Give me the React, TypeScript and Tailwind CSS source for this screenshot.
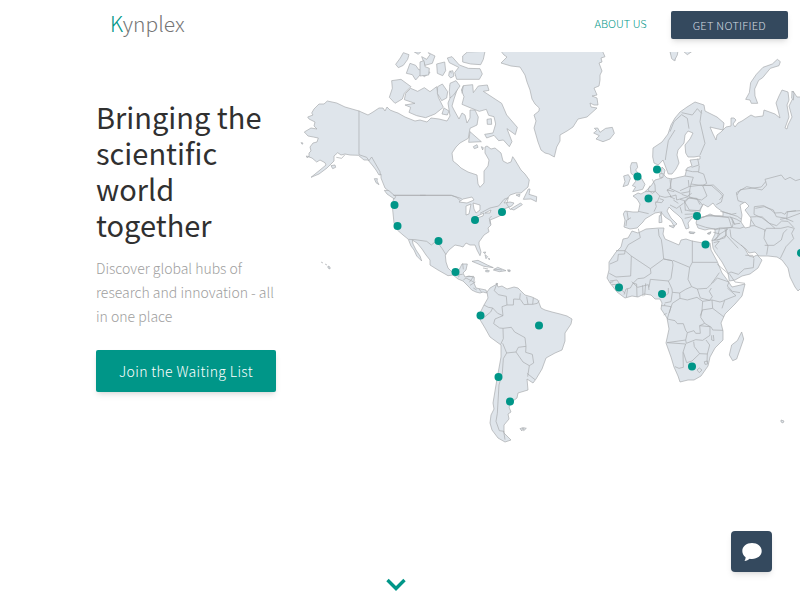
interface MapRegion {
  x: number;
  y: number;
  land?: string;
  borders?: string;
}

// Крупные массивы суши, в координатах карты
const continents = [
  // Северная Америка
  'M327.3 101L324 104L319 104L314 109L311.7 113L313 115L307.7 117L309 119L315 122L314 126L317 129L311 128L304.3 132L308 136L313.3 137L318.3 138L317 142L313 143L310 147L311 151L309 153L309 157L312 158L316.7 162L320 160L325 162.7L326 165L320 170L311 177.3L319 174L327 168L334 161L334 156L337.7 152.7L341 155L345 154L350 155L358.3 155.3L364 160L368 160L373 166L376 170L379 175L381 174L381 178L383 183L385 188L390 192L394 196L393 202L392.7 210L394 223L397.3 230L403 235L408.3 239.3L411 246L414 250L416.7 256L421.7 261L420 256L416 250L413 244L412.3 240L417 243L422 249L426 255L430 260L430 265L438 270L448 275.7L453 275L458 279L463 281L469 287L471.7 290L476 292L480 293L483 292L486.7 293L486 290L481 289L476 288L474 283L474.3 277.3L469 276L465 277L463 273L466 270L467.3 264L462 264L459 270L452 272L448 268L446 262L445.3 255L449 250L455 245L460 246L463 247L466 243L470 245L475 245L477 250L480 255.7L481 252L479 245L479 242L484 235L489 231.7L488 228L491 225L490 220L495 218L501.7 215L505 213L504 209L511.7 206L514 203L510 202L504 203L510 195L516 193L521 193L528 187L529.3 180L525 174L521 170L518 165L515 160L512.7 156.7L511 162L507.3 163.3L503 161L501 153L495 148L491 149L487 146L485 147L485 153L489 160L488 166L484 171L484 183L480 187.3L478 184L477 175L468 172L461 168L458 165L453 161L452 153L456 147L460 143L468.3 138.3L470 128.3L477 125L478.3 117L475 110L470 110L470 118L467 123L465 115L462 113L459 119L454 110L452 106L454 99L458 87L455 82L450 85L452 93L448 103L450 116L447 121L439 119L431 118L427 122L420 120L415 121L405 117L398 113L395 112L390 110L387 107L385 111L383 108L379 108L373 112L368 115L359 111L345 107L336.7 103Z',
  // Гренландия
  'M500 50L504 55L507 57L501 63L511 66L520 67L525 75L527 82L530 90L532 99L535 104L539.3 108L539 111L534 115L536 121L534 128L538 142L541 150L545 153L549 154L554.3 157L556.7 147L560 141L560 135L567 131L573 127L578 119L587 117L597 108L591 107L590 103L594 105L598 105L597 98L592 96L597 95L594 88L599 86L600 80L600 75L602 71L599 63L602 62L601 58L605 56.7L602 50Z',
  // Евразия
  'M802 97L797 97L793 91L793 98L789 106L792 117L788 125L787 129L785 128L789 117L787 105L789 100L788 92L782 90L779 96L776 103L778 110L780 118L775 114L764 110L763 116L755 117L751 115L748 117L742 121L738 123L735 127L733 124L736 120L734 118L731 118L731 126L726 127L721 132L717 135L716 140L713 134L710 127L714 128L723 130L724 123L717 117L705 111L704 105L695 102L687 107L680 112L675 118L671 125L668 134L662 142L653 148L652.7 157L654 163L658.3 165L663 160L666 168L668.3 174L672 174L676 169L679 163L677 155L678 150L684 143L685 135L688 131L693 133L690 139L685 145L685.7 153L688 157L694 157L700 156L700 159L690 160L692 166L687 168L685 176L680 177L672 179L667 178L664 175L665 170L662 167L661 173L662 178L655 180L651 186L645 191.7L641 194L638 193L633 196L637 199L640 204L638.3 212L633 212L625 211L623.3 214L625 220L624 227L630 229L637 228L643 222L645 219L650 216L655 213L661 212L665 217L671 221L674 226L677 224L671 218L667 211L669 207L673 211L678 215L682 219L684 224L686 229L689 228L688 223L692 218L697 216L700 212L701 208L703 204L708 207L713 203L716 207L723 212L723 216L715 216L710 214L704 217L697 219L696 223L698 228L705 230L709 229L715 229L715 234L712 240L713 248L715 252L722 262L728 273L729.3 281L735 280L742 276L750 274L758 268L762 260L757 255L753 257L749 256L745 249L741 245L746 249L749 253L755 252L759 256L768 256L777 257L782 260L785 264L788 268L790 277L795 287L798 291L802 287Z',
  // Африка
  'M632 231L628 238L623 239L621 247L616 252L609 262L609 270L607 278L610 283L617 292L625 298L632 296L638 297L644 294L651 295L655 299L660 299L662 303L661 309L667 318L669 329L666 343L671 357L674 367L678 376L680 382L688 380L694 380L701 376L708 366L710 357L715 348L723 340L723 331L721 323L725 314L735 304L742 296L745 284L732 287L728 281L722 273L717 261L711 250L710 243L703 243L692 241L686 239L681 240L679 245L672 242L665 239L663 234L664 228L659 228L646 229L638 233Z',
  // Южная Америка
  'M487 292L490 288L497 284L498 287L502 286L507 289L514 287L518 288L525 295L532 297L538 300L541 308L545 310L552 312L560 314L567 316L572 319L571 324L565 333L565 341L562 350L555 353L546 358L542 369L536 379L533 383L527 379L528 390L518 393L517 398L513 401L509 407L511 412L508 414L509 419L504 425L504 433L511 440L505 442L498 438L492 430L490 423L491 415L494 409L493 403L497 379L501 357L501 345L490 337L485 328L479 318L480 313L484 305L488 298Z',
];

// Острова и внутренние границы, сетка каждого участка втрое мельче карты
const regions: MapRegion[] = [
  // Аляска и север Канады
  {
    x: 295,
    y: 50,
    land: 'M325 8L342 14L338 28L325 46L310 53L302 43L316 24ZM358 6L378 5L370 13ZM345 40L362 46L372 60L390 52L405 68L388 80L378 72L362 90L352 74L334 70ZM290 92L318 88L348 110L328 130L322 147L300 160L283 142L292 115ZM347 115L368 124L388 113L405 125L425 110L430 142L445 172L420 192L392 203L365 197L342 187L347 172L330 165L360 160L328 149L332 130ZM380 20L395 28L405 14L400 8L420 18L412 40L390 46ZM108 347L120 345L122 352L113 356ZM238 386L247 386L246 393L252 404L243 398ZM268 421L282 422L302 440L298 447L276 432ZM18 278L24 279L22 283ZM34 318L42 320L36 323Z',
    borders: 'M192 182L192 314L215 322L222 332L230 321L255 365L256 376M298 436L392 436M124 322L140 325L150 314',
  },
  // Канадский архипелаг, Великие озёра, Атлантика
  {
    x: 420,
    y: 50,
    land: 'M0 36L12 32L15 50L28 55L26 75L0 78ZM50 42L74 36L77 62L68 77L52 70ZM82 24L96 20L118 45L145 55L180 56L187 72L178 88L110 88L104 68L116 52L88 38ZM128 18L142 6L195 4L190 28L182 44L152 42L128 36ZM88 65L98 62L102 78L92 84L86 77ZM53 110L67 102L83 125L80 144L65 152L52 130ZM90 100L108 92L120 108L101 135L90 144L88 124ZM72 174L87 183L82 195L66 192ZM130 107L158 104L160 128L175 108L202 105L207 121L190 124L222 145L245 160L260 195L292 232L286 254L261 236L276 275L268 290L250 270L236 272L222 256L200 264L194 253L219 249L227 222L222 200L206 196L199 178L178 184L150 173L126 163L132 140L124 120ZM150 245L184 275L146 277ZM201 208L214 206L215 223L202 223ZM160 290L171 284L174 292L163 296ZM184 290L190 293L188 300ZM310 448L325 417L330 417L327 433L350 440L349 455L333 447ZM272 477L302 459L307 464L282 480ZM288 435L300 433L298 440Z',
    borders: 'M0 436L94 436L110 442L125 456M180 490L210 474L236 468L252 448L265 443L260 462L272 480M94 70L90 62M130 107L126 130',
  },
  // Исландия, Британские острова, Западная Европа
  {
    x: 545,
    y: 50,
    land: 'M148 235L158 234L165 247L182 235L202 232L208 250L195 267L174 275L153 267L163 257L146 249L155 242ZM260 338L275 338L278 352L272 360L285 378L300 403L293 418L263 425L272 411L262 407L272 394L267 377L258 370L256 350ZM236 378L250 374L256 385L249 405L234 410L240 395ZM344 371L355 371L354 382L344 382ZM376 5L390 2L390 32L380 18Z',
    borders: 'M390 240L370 272L363 315L361 330M315 407L309 420L322 430L331 424M322 388L330 405L331 424L344 438L337 455L331 458L334 470L327 485M280 484L311 491M246 484L250 510M331 456L350 458L356 450L344 446M375 388L378 414L366 420L378 439L360 442L344 438M366 420L388 425M375 440L390 447M300 425L331 424',
  },
  // Северная и Восточная Европа
  {
    x: 670,
    y: 50,
    land: 'M0 5L24 2L22 15L13 32L5 26ZM40 4L65 5L52 14ZM322 28L331 35L327 47L301 55L278 83L266 91L254 117L255 138L263 160L244 160L240 150L227 148L238 128L242 98L259 73L279 52L307 42ZM366 123L372 130L370 150L365 145Z',
    borders: 'M0 245L12 215L35 194L52 205L57 236M35 188L67 195L82 176L95 190M95 180L90 215L105 280L90 315M83 326L87 345L65 352M88 347L86 365L67 365L45 360M84 366L101 372L110 400L98 407L63 402L70 382L45 378M5 385L0 415L32 430L58 425L63 402M60 422L57 440L70 445L95 450L111 438L98 407L130 405L160 433L154 456L139 464M18 435L20 450L55 440M0 440L18 435M43 454L54 444L84 448L98 466L88 482L58 480L43 454M0 465L20 475L40 460M30 470L36 490M204 452L199 428L230 410L276 420L290 405L285 388L334 375L345 389L360 382L377 392L390 388M204 452L229 460M256 475L283 470L310 480L319 500L350 505L390 490M151 484L184 493L199 490M10 450L25 460M350 508L352 486L378 482',
  },
  // США, Мексика, Карибы
  {
    x: 380,
    y: 190,
    land: 'M276 214L294 211L322 225L340 233L312 229ZM340 240L353 232L378 242L358 245ZM317 241L328 242L326 246L317 245ZM384 241L391 241L390 245L384 244ZM310 187L317 186L315 191ZM315 194L323 200L318 206ZM325 205L330 207L327 209ZM348 280L354 281L350 284Z',
    borders: 'M40 16L214 16L245 26M86 148L105 149L140 154L154 165L169 153L186 175L198 194M236 262L237 254L248 253M250 270L258 264L281 276M270 286L286 276M248 220L250 238M331 103L328 85L335 78M280 294L290 300',
  },
  // Южная Америка
  {
    x: 460,
    y: 270,
    land: 'M180 476L188 473L186 483ZM190 473L199 475L191 482Z',
    borders: 'M110 42L103 62L115 74L139 79L141 105L126 110L129 137M72 105L85 112L98 114L92 126L75 140L60 148M98 114L113 130L129 137L105 147L101 161L119 174L129 175L130 206L122 223M129 175L154 172L164 186L195 203L198 229L175 232L168 246L140 249L128 220M141 105L160 105L161 87L179 88L181 70M181 88L192 104L204 103L200 80M220 83L218 103L232 100L238 92M204 103L218 103M198 229L197 247L217 253L221 279L208 287L189 276L168 246M140 249L130 266L127 309L117 345L112 430L108 454L118 482L132 484M208 287L203 320M201 310L225 329M131 483L135 509M20 20L41 19L28 37M57 57L65 67',
  },
  // Африка
  {
    x: 600,
    y: 210,
    land: 'M425 366L431 387L410 447L398 452L388 435L395 405L412 392ZM178 17L184 16L186 37L177 38ZM207 47L224 48L220 54ZM267 67L284 68L281 71L269 70ZM322 71L332 67L328 73ZM180 12L185 5L184 15Z',
    borders: 'M93 23L80 31L78 48M115 56L121 83L85 104L75 122L48 122M75 122L74 132L55 133L53 152L30 162M75 122L94 138L151 176L191 147L188 117L184 89L177 77L175 57M94 138L92 198L48 201L28 190M151 176L153 190L132 204L113 206L99 220L91 234L78 237L72 254M191 147L217 152L219 165L213 206L205 213L151 208L147 232M219 151L269 172L277 157L277 92M277 157L351 157M269 172L264 208L275 230L292 237L321 235L332 224L346 205L358 188M275 230L257 238L239 249L217 247L216 237L205 213M217 247L213 275L194 279M239 249L240 265L217 280L207 309L202 327M240 265L262 270L291 262L308 274L306 302L302 322L314 340L299 347L301 370L287 370L282 362L262 368L257 390L201 398M292 237L301 264L329 271L337 260L328 244L334 234M308 274L336 270L338 295L372 321M306 300L338 295M372 271L408 257L382 234M374 271L366 295M336 270L360 276L373 272M314 340L334 352L338 360L369 361M299 347L330 350L330 376L308 391L287 389L259 400L257 390M201 398L257 402L249 427L250 472L237 475L225 470M250 427L260 458L276 453L299 431L283 410L281 395M299 431L322 432L329 405L318 390M322 432L321 457M340 375L342 392L335 390L335 376M291 480L298 474L306 480L298 488L291 480M313 455L322 453L323 462L315 463L313 455M99 220L110 222L111 261M128 226L129 259M137 220L134 257M95 215L113 232L145 224L147 240M83 236L79 262M30 213L51 210L60 224M30 218L40 215M35 224L51 223L50 237M47 240L61 235L75 250M205 234L205 250L189 263M184 287L194 287L194 282M194 287L213 290L208 309M202 327L225 332L232 341L250 341L257 361L262 368M200 310L191 315M335 92L348 88L360 72L340 67M360 72L384 57M381 54L375 83L350 91M390 58L393 82L425 107M290 30L299 25L320 18L360 18L386 23L395 52L375 55L348 58L317 52L290 43M395 23L405 45M216 152L191 147M307 300L301 317',
  },
  // Ближний Восток и Центральная Азия
  {
    x: 680,
    y: 180,
    land: 'M28 155L45 157L42 160L30 159ZM83 160L93 155L90 162Z',
    borders: 'M0 32L27 20L25 0M27 20L66 15L95 17L119 38L128 48L118 60M5 43L22 49L35 40M0 58L14 62L16 92M12 70L28 53L50 55L60 74M16 90L35 94L60 91M14 103L38 102L47 96M14 115L32 111L48 104M62 112L90 106L129 111L151 111L160 126L157 143L119 144L103 148M119 144L113 169L101 182M135 146L139 166L118 178L103 181M139 166L175 205M101 188L118 184L105 199L113 207M143 281L153 276L175 283L193 267L220 263L222 235M196 226L218 226L221 234M151 111L170 118L184 126M129 95L172 109L183 117M155 124L164 132L180 130M158 143L180 145L197 139L223 137L255 150L252 175L264 198L260 224M225 137L211 116L211 111M211 111L230 110L247 111L285 145L259 145L254 155M223 80L222 103L244 113M223 80L251 77L272 89L284 99L304 98L315 103M285 145L302 145L324 140L343 145M254 196L282 196L304 180L310 159L321 148M343 145L335 160L341 176L318 200L301 235M244 112L268 130L290 137L305 123L324 124L341 142M300 118L316 115L340 125M171 45L181 29L244 21L257 5M315 103L320 95L360 92M112 253L145 281M148 281L165 306L195 310M97 310L112 294L147 306L142 318L157 334L180 338',
  },
];

const lakes = [
  'M740 205L745 202L749 206L745 210L751 218L750 227L745 228L741 222L742 215Z',
  'M459 202L463 199L472 197L474 200L467 203ZM466 206L471 204L469 214L466 215ZM473 203L480 205L480 210L476 213L474 209ZM475 217L484 213L483 216L477 218ZM485 213L491 210L490 213Z',
];

const hubs = [
  [394.5, 205],
  [397.5, 226],
  [438.5, 241],
  [475, 220],
  [502, 212],
  [455.5, 272],
  [480.5, 315.5],
  [539, 325.5],
  [498.5, 377],
  [510, 401.5],
  [637.5, 176.5],
  [657, 169.5],
  [648.5, 198.5],
  [697, 216],
  [705.5, 244.5],
  [619, 287.5],
  [662, 294],
  [692, 366.5],
  [801, 253],
];

function WorldMap() {
  return (
    <svg viewBox="300 52 500 400" className="block w-full" role="img" aria-label="Research hubs">
      <g fill="#dfe5eb" stroke="#a9acaf" strokeWidth="0.7" strokeLinejoin="round">
        {continents.map((d) => (
          <path key={d} d={d} />
        ))}
        {regions.map(({ x, y, land, borders }) => (
          <g key={`${x}-${y}`} transform={`translate(${x} ${y}) scale(0.33333)`} strokeWidth="2.1">
            <path d={land} />
            <path d={borders} fill="none" />
          </g>
        ))}
        {lakes.map((d) => (
          <path key={d} d={d} fill="#fff" />
        ))}
        <path d="M321 262l2 1M325 264l2 1M328 266l2 1l0 2l-2-1ZM781 420l3 1l-1 2l-2-1Z" />
        <path d="M483 268l5 1M494 269l8 1M507 270h3" />
      </g>
      <g fill="#009688">
        {hubs.map(([x, y]) => (
          <circle key={`${x}-${y}`} cx={x} cy={y} r="4" />
        ))}
      </g>
    </svg>
  );
}

function Header() {
  return (
    <header className="flex h-[52px] items-start justify-between pt-[11px] pr-3 pl-[110px]">
      <a href="#" className="text-[21px] leading-6 font-light text-[#757575]">
        <span className="text-[#009688]">K</span>ynplex
      </a>
      <nav className="flex items-start gap-6">
        <a href="#about" className="text-[11px] leading-6 font-light text-[#009688]">
          ABOUT US
        </a>
        <button className="h-7 rounded-xs bg-[#34495e] px-[22px] text-[11px] leading-6 font-light tracking-wide text-[#d5dbe1] shadow-md">
          GET NOTIFIED
        </button>
      </nav>
    </header>
  );
}

export default function App() {
  return (
    <div className="min-h-screen bg-white font-['Source_Sans_Pro','Noto_Sans_CJK_SC',sans-serif]">
      <Header />
      <main className="flex items-start gap-6 overflow-hidden pl-24">
        <div className="w-[180px] shrink-0 pt-[46px]">
          <h1 className="text-[29px] leading-9 text-[#303030]">Bringing the scientific world together</h1>
          <p className="mt-[14px] text-sm leading-6 font-light text-[#9e9e9e]">
            Discover global hubs of research and innovation - all in one place
          </p>
          <button className="mt-[22px] h-[42px] w-full rounded-xs bg-[#009688] text-sm font-light tracking-wide text-white shadow-md">
            Join the Waiting List
          </button>
        </div>
        <div className="min-w-0 flex-1">
          <WorldMap />
        </div>
      </main>

      <div className="fixed inset-x-0 bottom-2 flex justify-center pr-2">
        <button aria-label="Scroll down">
          <svg width="20" height="14" viewBox="0 0 20 14" fill="none" stroke="#009688" strokeWidth="3.4">
            <path d="M1.5 2L10 10.5L18.5 2" />
          </svg>
        </button>
      </div>

      <button
        aria-label="Open chat"
        className="fixed right-7 bottom-7 flex size-[41px] items-center justify-center rounded-sm bg-[#34495e] shadow-md"
      >
        <svg width="20" height="18" viewBox="0 0 20 18" fill="#fff">
          <path d="M10 0C4.5 0 .3 3.4.3 8c0 2.500 1.200 4.700 3.300 6.200c0 1.600-.4 2.700-1.200 3.700c2.200-.1 4-1 5.300-2.200c.7.2 1.500.2 2.300.2c5.500 0 9.700-3.400 9.700-7.900S15.500 0 10 0Z" />
        </svg>
      </button>
    </div>
  );
}
